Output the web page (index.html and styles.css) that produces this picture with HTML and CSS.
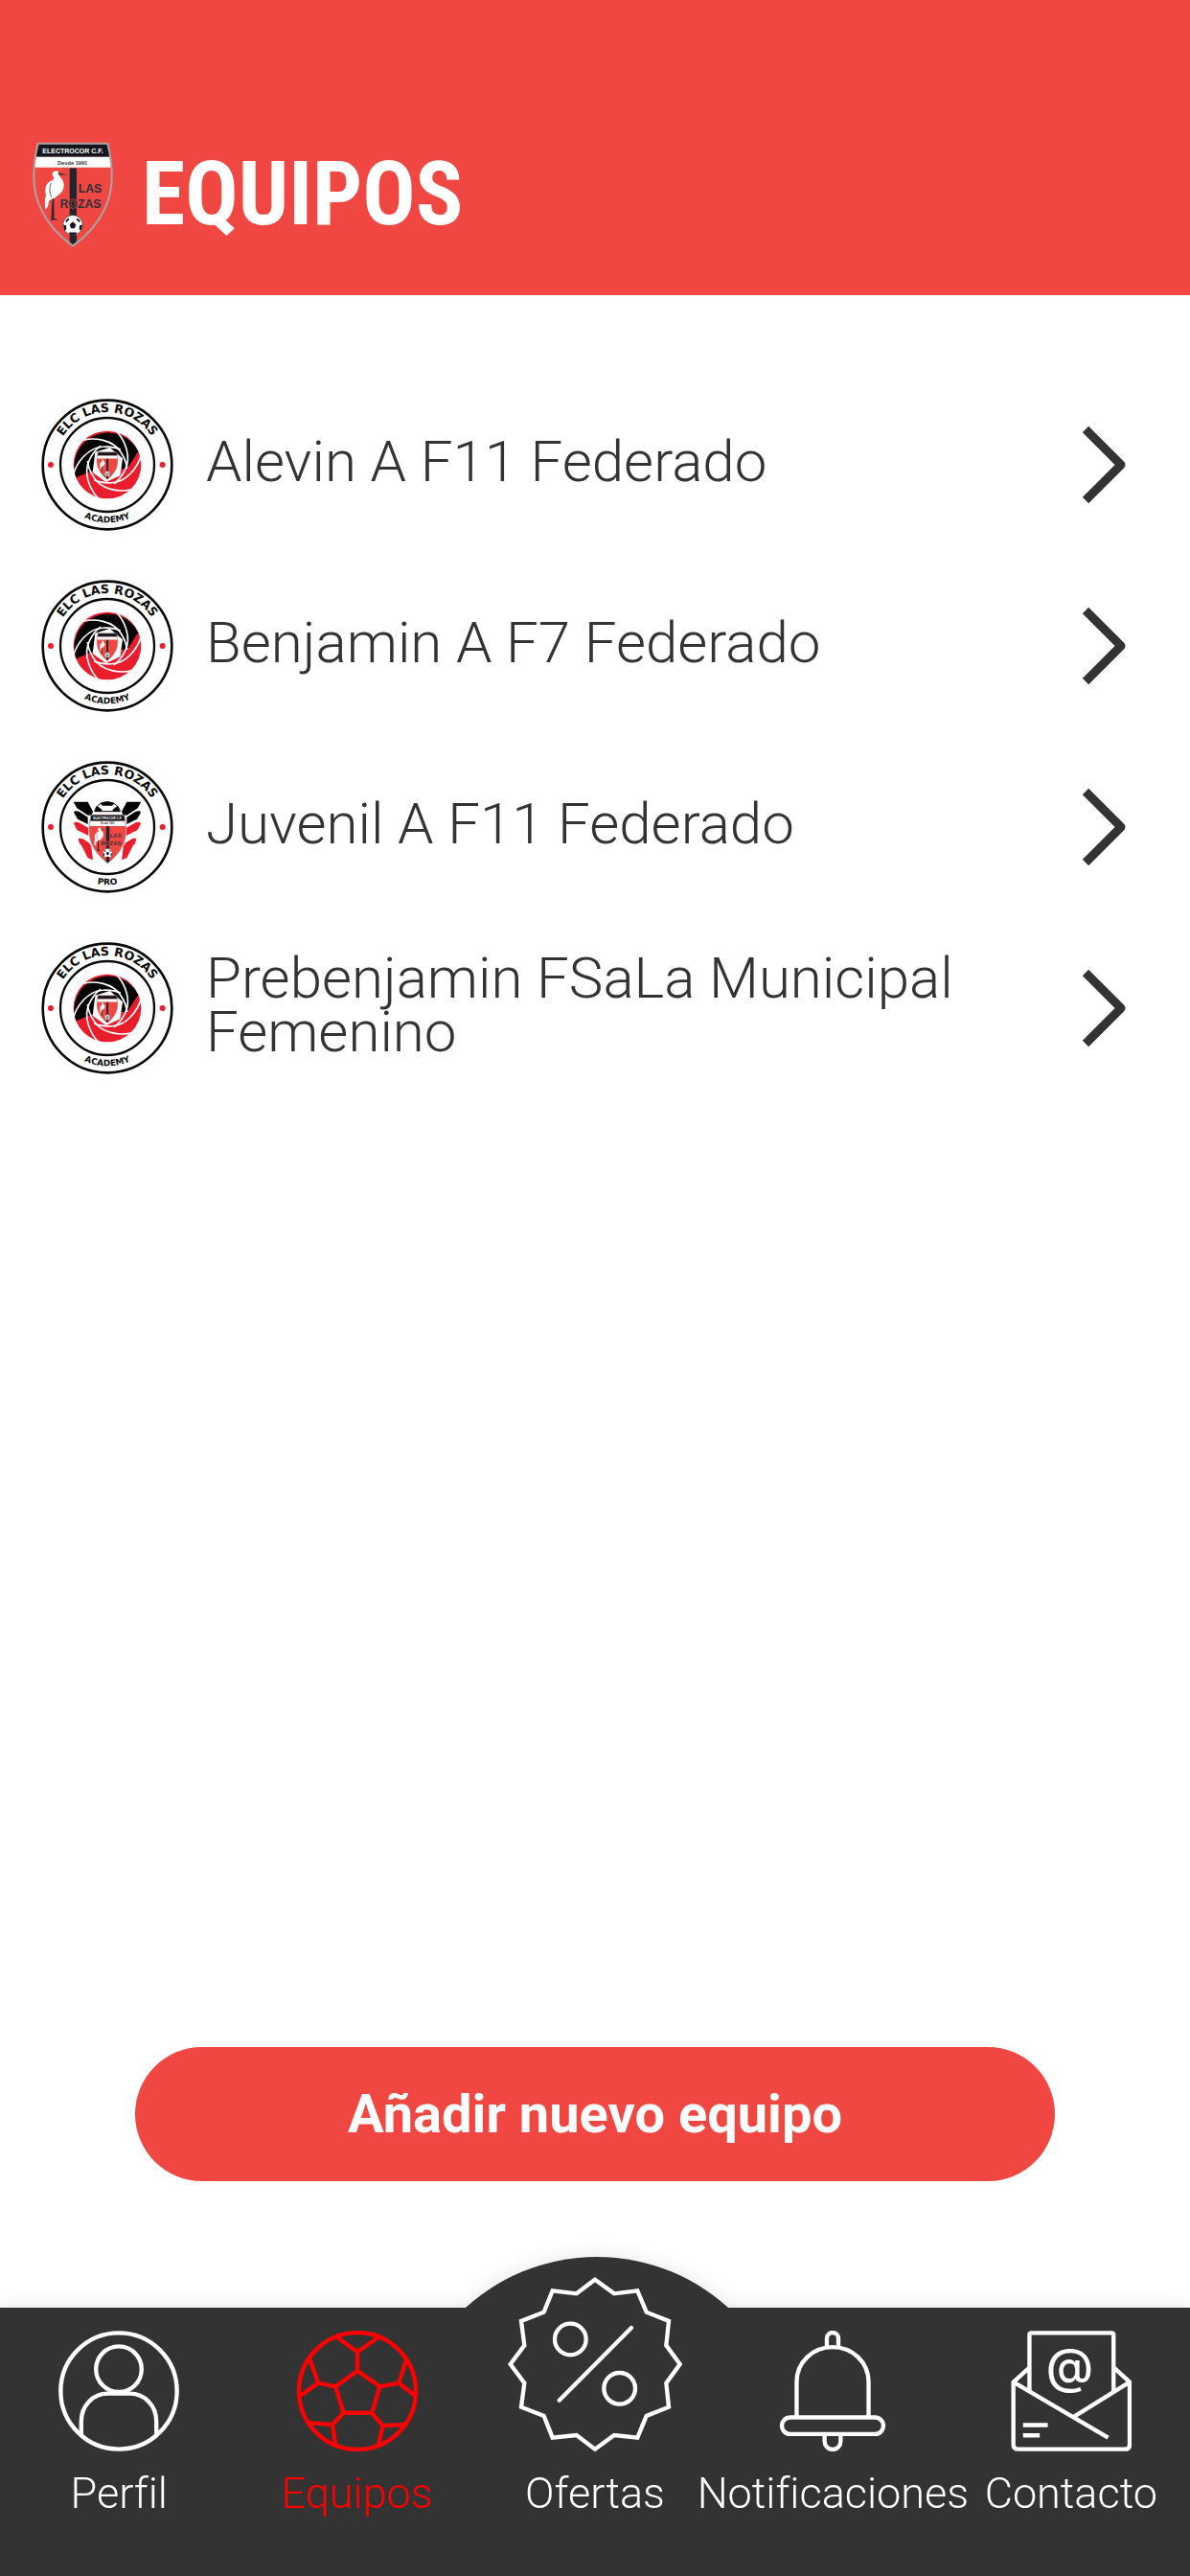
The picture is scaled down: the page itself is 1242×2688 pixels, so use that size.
FILE: index.html
```html
<!DOCTYPE html>
<html lang="es">
<head>
<meta charset="utf-8">
<meta name="viewport" content="width=device-width, initial-scale=1">
<title>Equipos</title>
<link rel="stylesheet" href="styles.css">
</head>
<body>
<svg class="sprite" aria-hidden="true">
  <symbol id="crest" viewBox="14 23 252 329">
    <path d="M31 28 H249 C270 115 266 180 240 232 C218 280 180 320 140 348 C100 320 62 280 40 232 C14 180 10 115 31 28Z" class="crest-field"/>
    <path d="M30 29 H250 L256 70 H24Z" fill="#15171e"/>
    <path d="M24 70 H256 L259 103 H21Z" fill="#fff"/>
    <path d="M130 105 H152 V343 L140 348 L130 341Z" fill="#22252c"/>
    <path d="M76 121 C82 110 98 111 97 125 C98 132 112 140 112 158 C112 178 96 190 80 200 L66 206 L62 226 L54 234 C52 215 52 200 56 190 C48 150 70 146 80 140 C84 136 74 130 76 121Z" fill="#fff"/>
    <path d="M93 119 L122 125 L96 126Z M76 200 H81 V262 L96 266 L72 268Z" fill="#26282e"/>
    <path d="M72 152 C66 166 66 182 74 196" fill="none" stroke="#555" stroke-width="3"/>
    <circle cx="140" cy="283" r="31" fill="#fff" stroke="#333" stroke-width="2"/>
    <path d="M140 272 L150 281 L146 293 H134 L130 281Z M118 268 L127 261 L129 266 L118 276Z M162 268 L153 261 L151 266 L162 276Z M126 306 H154 L147 314 H133Z M110 282 L119 284 L120 297 L114 300Z M170 282 L161 284 L160 297 L166 300Z" fill="#15171e"/>
    <path d="M31 28 H249 C270 115 266 180 240 232 C218 280 180 320 140 348 C100 320 62 280 40 232 C14 180 10 115 31 28Z" fill="none" stroke="#a9a5a6" stroke-width="6"/>
  </symbol>

  <symbol id="badge-ring" viewBox="38 48 414 414">
    <circle cx="245" cy="255" r="202" fill="#fff" stroke="#0a0a0a" stroke-width="8"/>
    <circle cx="245" cy="255" r="147" fill="none" stroke="#0a0a0a" stroke-width="7"/>
    <circle cx="68" cy="255" r="9" fill="#ea1d2c"/>
    <circle cx="418" cy="255" r="9" fill="#ea1d2c"/>
  </symbol>

  <symbol id="badge-academy" viewBox="38 48 414 414">
    <use href="#badge-ring" x="38" y="48" width="414" height="414"/>
    <g transform="translate(245 255)">
      <circle r="106" fill="#ea1d2c"/>
      <path d="M-98 40 A106 106 0 0 1 97 -42 L60 15 L0 0Z" fill="#050505"/>
      <g fill="none" stroke="#fff" stroke-width="5">
        <path id="blade" d="M-82 -76 C-40 -88 18 -78 42 -40 C54 -22 60 -6 62 12"/>
        <use href="#blade" transform="rotate(60)"/>
        <use href="#blade" transform="rotate(120)"/>
        <use href="#blade" transform="rotate(180)"/>
        <use href="#blade" transform="rotate(240)"/>
        <use href="#blade" transform="rotate(300)"/>
      </g>
      <path d="M-38 -40 L8 -54 L48 -20 L40 34 L-4 54 L-46 24Z" fill="#fff"/>
    </g>
    <use href="#crest" x="210" y="214" width="70" height="88"/>
  </symbol>

  <symbol id="badge-pro" viewBox="38 48 414 414">
    <use href="#badge-ring" x="38" y="48" width="414" height="414"/>
    <g id="wing">
      <path d="M139 176 H184 L200 206 L196 218 H184 L150 196Z M140 209 Q142 202 156 206 L184 224 V246 L152 230Z" fill="#050505"/>
      <path d="M140 244 Q142 237 156 241 L186 258 V282 L150 264Z M154 294 Q156 288 168 292 L190 306 V322 L160 310Z M156 296 L194 312 L200 358 L184 352Z" fill="#ea1d2c"/>
    </g>
    <use href="#wing" transform="translate(490 0) scale(-1 1)"/>
    <path d="M205 206 C212 168 278 168 285 206Z" fill="#fff" stroke="#050505" stroke-width="3"/>
    <path d="M222 180 Q245 170 268 180 L260 188 H230Z M206 206 L212 188 L228 200 V206Z M284 206 L278 188 L262 200 V206Z" fill="#050505"/>
    <use href="#crest" x="184" y="214" width="124" height="156"/>
  </symbol>

  <symbol id="chevron" viewBox="0 0 48 84">
    <path d="M4 5 L41 42 L4 79" fill="none" stroke="#333" stroke-width="9" stroke-linejoin="round"/>
  </symbol>

  <symbol id="icon-profile" viewBox="-188 -188 376 376">
    <circle r="181"/>
    <ellipse cy="-68" rx="71" ry="71"/>
    <path d="M-117 137 V95 C-117 45 -80 8 -35 8 H35 C80 8 117 45 117 95 V137"/>
  </symbol>

  <symbol id="icon-ball" viewBox="32 35 376 376">
    <circle cx="220" cy="223" r="182"/>
    <path d="M220 160 L290 209 L265 291 H177 L152 209Z M220 160 V101 L157 56 M220 101 L285 56 M152 209 L98 198 L72 124 M98 198 L42 238 M290 209 L349 198 L373 124 M349 198 L400 238 M177 291 L142 328 L70 322 M142 328 L152 392 M265 291 L299 331 L370 327 M299 331 L286 390"/>
  </symbol>

  <symbol id="icon-offers" viewBox="180 105 546 546">
    <path d="M453 113 L513 157 L586 148 L614 215 L684 243 L676 319 L719 378 L676 437 L684 512 L614 540 L586 608 L513 600 L453 644 L395 600 L320 608 L293 540 L222 512 L232 437 L188 378 L232 319 L222 243 L293 215 L320 148 L395 157Z"/>
    <circle cx="376" cy="300" r="49"/>
    <circle cx="530" cy="454" r="49"/>
    <path d="M567 264 L341 491" stroke-linecap="round"/>
  </symbol>

  <symbol id="icon-bell" viewBox="-188 -188 376 376">
    <path d="M-18 -138 V-164 A18 18 0 0 1 18 -164 V-138 M-112 82 V-28 C-112 -90 -62 -137 0 -137 C62 -137 112 -90 112 -28 V82 M-25 136 V157 A25 25 0 0 0 25 157 V136"/>
    <rect x="-158" y="82" width="316" height="52" rx="26"/>
  </symbol>
</svg>

<header class="header">
  <svg class="header-logo" viewBox="14 23 252 329" role="img" aria-label="Electrocor C.F. Las Rozas">
    <use href="#crest" x="14" y="23" width="252" height="329"/>
    <g class="crest-text">
      <text x="140" y="59" font-size="21" fill="#fff">ELECTROCOR C.F.</text>
      <text x="139" y="93" font-size="17" fill="#333">Desde 1991</text>
      <text class="crest-name" x="194" y="181" font-size="37">LAS</text>
      <text class="crest-name" x="164" y="228" font-size="37">ROZAS</text>
    </g>
  </svg>
  <h1 class="header-title">EQUIPOS</h1>
</header>

<main class="main">
  <ul class="teams">
    <li><a class="team" href="#alevin">
      <svg class="team-badge" viewBox="38 48 414 414" aria-hidden="true">
        <path id="arc-top" d="M80 255 A165 165 0 0 1 410 255" fill="none"/>
        <path id="arc-bottom" d="M64 255 A181 181 0 0 0 426 255" fill="none"/>
        <use href="#badge-academy" x="38" y="48" width="414" height="414"/>
        <text class="badge-text" font-size="38"><textPath href="#arc-top" startOffset="50%">ELC LAS ROZAS</textPath></text>
        <text class="badge-text" font-size="27"><textPath href="#arc-bottom" startOffset="50%">ACADEMY</textPath></text>
      </svg>
      <span class="team-name">Alevin A F11 Federado</span>
      <svg class="team-chevron" aria-hidden="true"><use href="#chevron"/></svg>
    </a></li>
    <li><a class="team" href="#benjamin">
      <svg class="team-badge" viewBox="38 48 414 414" aria-hidden="true">
        <use href="#badge-academy" x="38" y="48" width="414" height="414"/>
        <text class="badge-text" font-size="38"><textPath href="#arc-top" startOffset="50%">ELC LAS ROZAS</textPath></text>
        <text class="badge-text" font-size="27"><textPath href="#arc-bottom" startOffset="50%">ACADEMY</textPath></text>
      </svg>
      <span class="team-name">Benjamin A F7 Federado</span>
      <svg class="team-chevron" aria-hidden="true"><use href="#chevron"/></svg>
    </a></li>
    <li><a class="team" href="#juvenil">
      <svg class="team-badge" viewBox="38 48 414 414" aria-hidden="true">
        <use href="#badge-pro" x="38" y="48" width="414" height="414"/>
        <text class="badge-text" font-size="38"><textPath href="#arc-top" startOffset="50%">ELC LAS ROZAS</textPath></text>
        <text class="badge-text" font-size="27"><textPath href="#arc-bottom" startOffset="50%">PRO</textPath></text>
        <g class="crest-text">
          <text x="246" y="231" font-size="10" fill="#fff">ELECTROCOR C.F.</text>
          <text x="246" y="247" font-size="8" fill="#333">Desde 1991</text>
          <text class="crest-name" x="271" y="288" font-size="18">LAS</text>
          <text class="crest-name" x="257" y="311" font-size="18">ROZAS</text>
        </g>
      </svg>
      <span class="team-name">Juvenil A F11 Federado</span>
      <svg class="team-chevron" aria-hidden="true"><use href="#chevron"/></svg>
    </a></li>
    <li><a class="team" href="#prebenjamin">
      <svg class="team-badge" viewBox="38 48 414 414" aria-hidden="true">
        <use href="#badge-academy" x="38" y="48" width="414" height="414"/>
        <text class="badge-text" font-size="38"><textPath href="#arc-top" startOffset="50%">ELC LAS ROZAS</textPath></text>
        <text class="badge-text" font-size="27"><textPath href="#arc-bottom" startOffset="50%">ACADEMY</textPath></text>
      </svg>
      <span class="team-name">Prebenjamin FSaLa Municipal Femenino</span>
      <svg class="team-chevron" aria-hidden="true"><use href="#chevron"/></svg>
    </a></li>
  </ul>
  <button class="add-button" type="button">Añadir nuevo equipo</button>
</main>

<nav class="tabs">
  <a class="tab" href="#perfil"><svg class="tab-icon" aria-hidden="true"><use href="#icon-profile"/></svg><span>Perfil</span></a>
  <a class="tab tab-active" href="#equipos" aria-current="page"><svg class="tab-icon" aria-hidden="true"><use href="#icon-ball"/></svg><span>Equipos</span></a>
  <a class="tab" href="#ofertas"><svg class="tab-icon tab-icon-large" aria-hidden="true"><use href="#icon-offers"/></svg><span>Ofertas</span></a>
  <a class="tab" href="#notificaciones"><svg class="tab-icon" aria-hidden="true"><use href="#icon-bell"/></svg><span>Notificaciones</span></a>
  <a class="tab" href="#contacto">
    <svg class="tab-icon" viewBox="32 35 376 376" aria-hidden="true">
      <path d="M90 222 V48 Q90 42 96 42 H346 Q352 42 352 48 V222 M88 152 L40 195 V390 Q40 404 55 404 H387 Q402 404 402 390 V195 L355 152 M40 195 L335 368 M402 195 L228 303 M70 329 H147 M70 361 H122"/>
      <text class="at-sign" x="215" y="200">@</text>
    </svg>
    <span>Contacto</span>
  </a>
</nav>
</body>
</html>
```
FILE: styles.css
```css
* {
  box-sizing: border-box;
}

body {
  display: flex;
  flex-direction: column;
  min-height: 100vh;
  margin: 0;
  background: #fff;
  color: #333;
  font-family: Roboto, "Liberation Sans", sans-serif;
  font-weight: 300;
  font-variant-ligatures: none;
}

.sprite {
  position: absolute;
  width: 0;
  height: 0;
}

.crest-field {
  fill: #f14742;
}

.crest-text {
  font-family: "Liberation Sans", sans-serif;
  font-weight: 700;
  text-anchor: middle;
}

.crest-name {
  fill: #2b3038;
  stroke: #f14742;
  stroke-width: 3px;
  paint-order: stroke;
}

.badge-text {
  fill: #0a0a0a;
  font-family: "DejaVu Sans", sans-serif;
  font-weight: 700;
  text-anchor: middle;
}

/* Header */
.header {
  display: flex;
  align-items: center;
  gap: 30px;
  padding: 148px 34px 50px;
  background: #f14742;
}

.header-logo {
  flex: none;
  width: 84px;
  height: 110px;
}

.header-title {
  margin: 0;
  color: #fff;
  font: 700 92px/108px "Roboto Condensed", Roboto, sans-serif;
}

/* Team list */
.main {
  display: flex;
  flex: 1;
  flex-direction: column;
  justify-content: space-between;
  gap: 60px;
  padding: 108px 0 132px;
}

.teams {
  display: flex;
  flex-direction: column;
  gap: 51px;
  margin: 0;
  padding: 0;
  list-style: none;
}

.team {
  display: flex;
  align-items: center;
  gap: 34px;
  padding: 0 65px 0 43px;
  color: inherit;
  text-decoration: none;
}

.team-badge {
  flex: none;
  width: 138px;
  height: 138px;
}

.team-name {
  flex: 1;
  padding-bottom: 6px;
  font-size: 60px;
  line-height: 56px;
}

.team-chevron {
  flex: none;
  width: 48px;
  height: 84px;
}

.add-button {
  margin: 0 141px;
  height: 140px;
  border: 0;
  border-radius: 70px;
  background: #f14742;
  color: #fff;
  font: 700 56px/66px Roboto, "Liberation Sans", sans-serif;
}

/* Bottom tabs */
.tabs {
  position: relative;
  display: grid;
  grid-template-columns: repeat(5, minmax(0, 1fr));
  min-height: 280px;
  padding-top: 24px;
  background: #333;
  filter: drop-shadow(0 0 10px rgba(0, 0, 0, 0.1));
}

.tabs::before {
  content: "";
  position: absolute;
  top: -53px;
  left: 50%;
  width: 408px;
  height: 204px;
  margin-left: -202px;
  border-radius: 204px 204px 0 0;
  background: #333;
}

.tab {
  position: relative;
  display: flex;
  flex-direction: column;
  align-items: center;
  gap: 18px;
  color: #fff;
  font-size: 45px;
  line-height: 52px;
  text-decoration: none;
  white-space: nowrap;
}

.tab-active {
  color: #f00;
}

.tab-icon {
  flex: none;
  width: 126px;
  height: 126px;
  fill: none;
  stroke: currentColor;
  stroke-width: 13px;
}

.tab-icon-large {
  width: 182px;
  height: 182px;
  margin-top: -56px;
}

.at-sign {
  fill: currentColor;
  stroke: none;
  font: 500 150px Inter, sans-serif;
  text-anchor: middle;
}
```
